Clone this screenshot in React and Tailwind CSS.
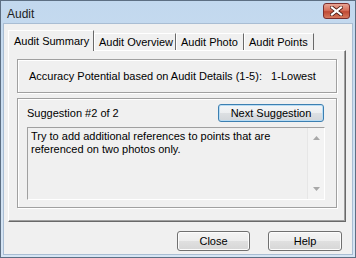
import React from 'react';

const font = { fontFamily: '"Liberation Sans", Arial, sans-serif' };

const WinButton = ({ children, className = '', primary = false }) => (
  <div
    className={`flex items-center justify-center rounded-[3px] border text-[11px] text-black ${
      primary
        ? 'border-[#3c7fb1] bg-[linear-gradient(#f4f6f8_0%,#eceef0_50%,#dde0e3_50%,#d2d6da_100%)] shadow-[inset_0_0_0_1px_#b8dcf4]'
        : 'border-[#707070] bg-[linear-gradient(#f4f4f4_0%,#ededed_50%,#e0e0e0_50%,#d6d6d6_100%)] shadow-[inset_0_0_0_1px_#fcfcfc]'
    } ${className}`}
  >
    {children}
  </div>
);

const Tab = ({ label, active, className = '' }) =>
  active ? (
    <div className={`relative z-10 -mr-[2px] flex h-[21px] items-center border-l border-t border-r border-l-white border-t-white border-r-[#696969] bg-[#f0f0f0] pl-[5px] ${className}`}>
      {label}
    </div>
  ) : (
    <div className={`mt-[3px] flex h-[18px] items-center border-l border-t border-r border-l-white border-t-white border-r-[#696969] bg-[#f0f0f0] pl-[4px] ${className}`}>
      {label}
    </div>
  );

export default function App() {
  return (
    <div
      style={font}
      className="flex h-[258px] w-[356px] flex-col border border-[#5d6f83] bg-[linear-gradient(#c2d8ee,#d6e5f4)] text-[11px] text-black"
    >
      {/* title bar */}
      <div className="flex h-[22px] shrink-0 items-start justify-between pl-[6px] pr-[5px]">
        <span className="mt-[4px] text-[12px] text-[#1e1e1e]">Audit</span>
        <div className="mt-[2px] flex h-[16px] w-[27px] items-center justify-center rounded-[3px] border border-[#7a2e2e] bg-[linear-gradient(#e8a493_0%,#d6705c_45%,#c04a34_55%,#d5795e_100%)]">
          <svg width="13" height="10" viewBox="0 0 13 10">
            <path d="M2 1.5 L11 8.5 M11 1.5 L2 8.5" stroke="#4a1a12" strokeWidth="3.8" strokeLinecap="square" />
            <path d="M2 1.5 L11 8.5 M11 1.5 L2 8.5" stroke="#ffffff" strokeWidth="2.2" strokeLinecap="square" />
          </svg>
        </div>
      </div>

      {/* client area */}
      <div className="mx-[2px] mb-[2px] flex flex-1 flex-col border border-[#a9bdd3] bg-[#f0f0f0] px-[4px] pt-[6px]">
        {/* tabs */}
        <div className="flex h-[21px] items-start">
          <Tab label="Audit Summary" active className="w-[86px]" />
          <Tab label="Audit Overview" className="ml-[2px] w-[82px]" />
          <Tab label="Audit Photo" className="w-[68px]" />
          <Tab label="Audit Points" className="w-[70px]" />
        </div>

        {/* tab panel */}
        <div className="-mt-[1px] flex h-[172px] w-[338px] flex-col border border-l-white border-t-white border-r-[#696969] border-b-[#696969] px-[8px] pt-[8px] shadow-[inset_-1px_-1px_0_#a0a0a0]">
          {/* group 1 */}
          <div className="flex h-[34px] items-center border border-[#a0a0a0] pl-[11px] shadow-[inset_1px_1px_0_white,1px_1px_0_white]">
            <span>Accuracy Potential based on Audit Details (1-5):&nbsp;&nbsp;&nbsp;1-Lowest</span>
          </div>

          {/* group 2 */}
          <div className="mt-[5px] flex h-[110px] flex-col border border-[#a0a0a0] pl-[9px] pr-[11px] pt-[5px] shadow-[inset_1px_1px_0_white,1px_1px_0_white]">
            <div className="flex h-[18px] items-center justify-between">
              <span>Suggestion #2 of 2</span>
              <WinButton primary className="mr-[1px] h-[18px] w-[106px]">
                Next Suggestion
              </WinButton>
            </div>
            <div className="mt-[5px] flex h-[73px] border border-[#a0a0a0] border-r-white border-b-white">
              <div className="flex-1 pl-[3px] pt-[2px] leading-[13px]">
                Try to add additional references to points that are referenced on two photos only.
              </div>
              <div className="flex w-[17px] flex-col items-center justify-between border-l border-[#e6e6e6] bg-[#f3f3f3] py-[8px]">
                <svg width="7" height="4" viewBox="0 0 7 4">
                  <path d="M0 4 L3.5 0 L7 4 Z" fill="#a8a8a8" />
                </svg>
                <svg width="7" height="4" viewBox="0 0 7 4">
                  <path d="M0 0 L3.5 4 L7 0 Z" fill="#a8a8a8" />
                </svg>
              </div>
            </div>
          </div>
        </div>

        {/* bottom buttons */}
        <div className="mt-[9px] flex justify-end gap-[18px] pr-[6px]">
          <WinButton className="h-[20px] w-[73px]">Close</WinButton>
          <WinButton className="h-[20px] w-[74px]">Help</WinButton>
        </div>
      </div>
    </div>
  );
}
